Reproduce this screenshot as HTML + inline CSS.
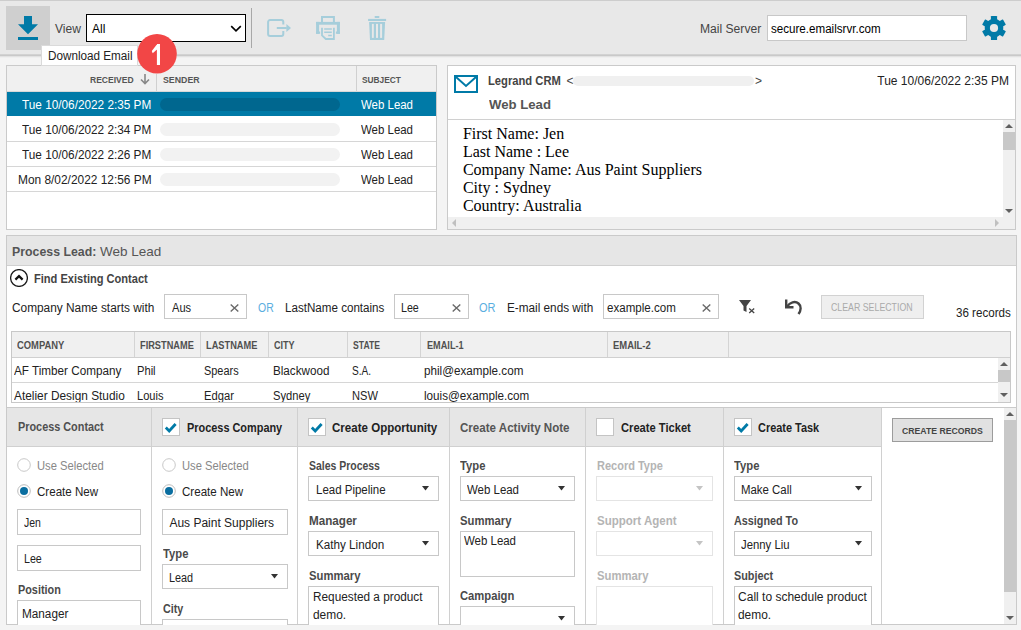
<!DOCTYPE html>
<html><head><meta charset="utf-8"><style>
html,body{margin:0;padding:0;width:1021px;height:630px;overflow:hidden;background:#f4f4f4;font-family:'Liberation Sans', sans-serif;}
body>div,body>svg{position:absolute;}
.t{white-space:nowrap;}
</style></head><body>
<div style="left:0px;top:0px;width:1021px;height:54px;background:#e8e8e8;"></div>
<div style="left:0px;top:0px;width:1021px;height:1px;background:#cdcdcd;"></div>
<div style="left:0px;top:54px;width:1021px;height:1px;background:#d2d2d2;"></div>
<div style="left:0px;top:55px;width:1021px;height:1px;background:#c9c9c9;"></div>
<div style="left:0px;top:56px;width:1021px;height:1px;background:#e2e2e2;"></div>
<div style="left:0px;top:57px;width:1021px;height:1px;background:#efefef;"></div>
<div style="left:6px;top:6px;width:44px;height:44px;background:#cfcfcf;"></div>
<svg style="left:18px;top:16px;" width="20" height="24" viewBox="0 0 20 24"><path d="M6 0h8v8.2h6l-10 10L0 8.2h6z" fill="#007aa7"/><rect x="0" y="21" width="20" height="3" fill="#007aa7"/></svg>
<div class="t" style="left:55.00px;top:22.84px;font-size:12px;line-height:12px;color:#444;">View</div>
<div style="left:86px;top:14px;width:160px;height:28px;background:#fff;border:1px solid #000;box-sizing:border-box;"></div>
<div class="t" style="left:92.00px;top:22.84px;font-size:12px;line-height:12px;color:#000;">All</div>
<svg style="left:230px;top:25px;" width="12" height="7" viewBox="0 0 12 7"><path d="M1.2 1.2l4.8 4.6 4.8-4.6" stroke="#000" stroke-width="1.6" fill="none"/></svg>
<div style="left:251px;top:8px;width:1px;height:40px;background:#a8a8a8;"></div>
<svg style="left:266px;top:18px;" width="26" height="20" viewBox="0 0 26 20"><path d="M17.3 6.4V4a2 2 0 0 0-2-2H4.1a2 2 0 0 0-2 2v11.9a2 2 0 0 0 2 2h11.2a2 2 0 0 0 2-2V13" stroke="#a6cedb" stroke-width="2" fill="none"/><path d="M10.8 10h10" stroke="#a6cedb" stroke-width="2"/><path d="M20.4 5.9l4.6 4.1-4.6 4.1z" fill="#a6cedb"/></svg>
<svg style="left:315px;top:15px;" width="26" height="27" viewBox="0 0 26 27"><path d="M7 7V2.1H18.9V7" stroke="#a6cedb" stroke-width="2" fill="none"/><g fill="#a6cedb"><rect x="1.1" y="6.9" width="23.8" height="2.8"/><rect x="1.1" y="6.9" width="3" height="11.9"/><rect x="21.9" y="6.9" width="3" height="11.9"/><rect x="1.1" y="16.5" width="4" height="2.3"/><rect x="20.9" y="16.5" width="4" height="2.3"/></g><path d="M7 12.7V20.3L10.8 24H18.9V12.7" stroke="#a6cedb" stroke-width="1.8" fill="none"/><path d="M9.2 14h7.6M9.2 17.2h7.6M13.2 20.4h3.6" stroke="#a6cedb" stroke-width="1.5"/></svg>
<svg style="left:367px;top:15px;" width="20" height="26" viewBox="0 0 20 26"><g fill="#a6cedb"><rect x="7.7" y="1.1" width="4.6" height="1.8" rx="0.5"/><rect x="1.1" y="3.9" width="18" height="2.1"/><path d="M2.1 6.9H18.1L17.2 24.9H3Z"/></g><g fill="#e8e8e8"><rect x="4.9" y="8.9" width="1.9" height="14"/><rect x="9" y="8.9" width="2" height="14"/><rect x="13.1" y="8.9" width="2" height="14"/></g></svg>
<div class="t" style="left:700.30px;top:22.84px;font-size:12px;line-height:12px;color:#444;transform:scaleX(1.0084);transform-origin:0 0;">Mail Server</div>
<div style="left:767px;top:15px;width:200px;height:26px;background:#fff;border:1px solid #c8c8c8;box-sizing:border-box;"></div>
<div class="t" style="left:771.00px;top:23.24px;font-size:12px;line-height:12px;color:#000;transform:scaleX(0.9667);transform-origin:0 0;">secure.emailsrvr.com</div>
<svg style="left:982px;top:16px;" width="24" height="24" viewBox="0 0 24 24"><g transform="translate(12,12)"><circle r="9.3" fill="#007aa7"/><rect x="-3.1" y="-12" width="6.2" height="5" rx="0.6" fill="#007aa7" transform="rotate(0)"/><rect x="-3.1" y="-12" width="6.2" height="5" rx="0.6" fill="#007aa7" transform="rotate(60)"/><rect x="-3.1" y="-12" width="6.2" height="5" rx="0.6" fill="#007aa7" transform="rotate(120)"/><rect x="-3.1" y="-12" width="6.2" height="5" rx="0.6" fill="#007aa7" transform="rotate(180)"/><rect x="-3.1" y="-12" width="6.2" height="5" rx="0.6" fill="#007aa7" transform="rotate(240)"/><rect x="-3.1" y="-12" width="6.2" height="5" rx="0.6" fill="#007aa7" transform="rotate(300)"/><circle r="4.1" fill="#e8e8e8"/></g></svg>
<div style="left:6px;top:65px;width:431px;height:165px;background:#fff;border:1px solid #cacaca;box-sizing:border-box;"></div>
<div style="left:7px;top:66px;width:429px;height:25px;background:#f0f0f0;"></div>
<div style="left:7px;top:91px;width:429px;height:1px;background:#d8d8d8;"></div>
<div style="left:156px;top:74px;width:1px;height:17px;background:#d0d0d0;"></div>
<div style="left:356px;top:66px;width:1px;height:25px;background:#d0d0d0;"></div>
<div class="t" style="left:90.30px;top:75.88px;font-size:9px;line-height:9px;color:#555;font-weight:700;transform:scaleX(0.9475);transform-origin:0 0;">RECEIVED</div>
<svg style="left:140px;top:74px;" width="10" height="11" viewBox="0 0 10 11"><path d="M5 0v9M1 5.5l4 4 4-4" stroke="#888" stroke-width="1.6" fill="none"/></svg>
<div class="t" style="left:162.50px;top:75.88px;font-size:9px;line-height:9px;color:#555;font-weight:700;transform:scaleX(0.9756);transform-origin:0 0;">SENDER</div>
<div class="t" style="left:362.00px;top:75.88px;font-size:9px;line-height:9px;color:#555;font-weight:700;transform:scaleX(0.9235);transform-origin:0 0;">SUBJECT</div>
<div style="left:7px;top:92px;width:429px;height:24px;background:#007aa7;"></div>
<div class="t" style="left:22.30px;top:99.34px;font-size:12px;line-height:12px;color:#fff;transform:scaleX(0.9821);transform-origin:0 0;">Tue 10/06/2022 2:35 PM</div>
<div style="left:160px;top:98.3px;width:180px;height:13px;background:#00678f;border-radius:6.5px;"></div>
<div class="t" style="left:361.00px;top:99.34px;font-size:12px;line-height:12px;color:#fff;transform:scaleX(0.9541);transform-origin:0 0;">Web Lead</div>
<div style="left:7px;top:141px;width:429px;height:1px;background:#d6d6d6;"></div>
<div class="t" style="left:22.30px;top:123.84px;font-size:12px;line-height:12px;color:#222;transform:scaleX(0.9821);transform-origin:0 0;">Tue 10/06/2022 2:34 PM</div>
<div style="left:160px;top:122.80000000000001px;width:180px;height:13px;background:#f2f2f2;border-radius:6.5px;"></div>
<div class="t" style="left:361.00px;top:123.84px;font-size:12px;line-height:12px;color:#222;transform:scaleX(0.9541);transform-origin:0 0;">Web Lead</div>
<div style="left:7px;top:166px;width:429px;height:1px;background:#d6d6d6;"></div>
<div class="t" style="left:22.30px;top:148.84px;font-size:12px;line-height:12px;color:#222;transform:scaleX(0.9821);transform-origin:0 0;">Tue 10/06/2022 2:26 PM</div>
<div style="left:160px;top:147.8px;width:180px;height:13px;background:#f2f2f2;border-radius:6.5px;"></div>
<div class="t" style="left:361.00px;top:148.84px;font-size:12px;line-height:12px;color:#222;transform:scaleX(0.9541);transform-origin:0 0;">Web Lead</div>
<div style="left:7px;top:191px;width:429px;height:1px;background:#d6d6d6;"></div>
<div class="t" style="left:18.00px;top:173.84px;font-size:12px;line-height:12px;color:#222;transform:scaleX(0.9914);transform-origin:0 0;">Mon 8/02/2022 12:56 PM</div>
<div style="left:160px;top:172.8px;width:180px;height:13px;background:#f2f2f2;border-radius:6.5px;"></div>
<div class="t" style="left:361.00px;top:173.84px;font-size:12px;line-height:12px;color:#222;transform:scaleX(0.9541);transform-origin:0 0;">Web Lead</div>
<div style="left:447px;top:65px;width:569px;height:165px;background:#fff;border:1px solid #cacaca;box-sizing:border-box;"></div>
<div style="left:448px;top:119px;width:567px;height:1px;background:#d0d0d0;"></div>
<svg style="left:454px;top:75px;" width="24" height="18" viewBox="0 0 24 18"><rect x="1" y="1" width="22" height="16" stroke="#007aa7" stroke-width="2" fill="none"/><path d="M2 2l10 9 10-9" stroke="#007aa7" stroke-width="2" fill="none"/></svg>
<div class="t" style="left:488.20px;top:74.54px;font-size:12px;line-height:12px;color:#444;font-weight:700;transform:scaleX(0.9333);transform-origin:0 0;">Legrand CRM</div>
<div class="t" style="left:566.50px;top:74.54px;font-size:12px;line-height:12px;color:#444;">&lt;</div>
<div style="left:573px;top:76px;width:181px;height:10px;background:#f0f0f0;border-radius:5px;"></div>
<div class="t" style="left:755.00px;top:74.54px;font-size:12px;line-height:12px;color:#444;">&gt;</div>
<div class="t" style="left:877.30px;top:75.04px;font-size:12px;line-height:12px;color:#222;">Tue 10/06/2022 2:35 PM</div>
<div class="t" style="left:488.50px;top:97.60px;font-size:13px;line-height:13px;color:#555;font-weight:700;transform:scaleX(1.0135);transform-origin:0 0;">Web Lead</div>
<div class="t" style="left:462.90px;top:126.20px;font-size:16px;line-height:16px;color:#000;font-family:'Liberation Serif', serif;">First Name: Jen</div>
<div class="t" style="left:462.90px;top:143.90px;font-size:16px;line-height:16px;color:#000;font-family:'Liberation Serif', serif;">Last Name : Lee</div>
<div class="t" style="left:462.90px;top:161.80px;font-size:16px;line-height:16px;color:#000;font-family:'Liberation Serif', serif;">Company Name: Aus Paint Suppliers</div>
<div class="t" style="left:462.90px;top:180.40px;font-size:16px;line-height:16px;color:#000;font-family:'Liberation Serif', serif;">City : Sydney</div>
<div class="t" style="left:462.90px;top:198.20px;font-size:16px;line-height:16px;color:#000;font-family:'Liberation Serif', serif;">Country: Australia</div>
<div style="left:1003px;top:120px;width:12px;height:97px;background:#f0f0f0;"></div>
<svg style="left:1003px;top:122px;" width="12" height="8" viewBox="0 0 12 8"><path d="M2 6h8L6 2z" fill="#606060"/></svg>
<div style="left:1003px;top:132px;width:12px;height:18px;background:#c8c8c8;"></div>
<svg style="left:1003px;top:207px;" width="12" height="8" viewBox="0 0 12 8"><path d="M2 2h8L6 6z" fill="#606060"/></svg>
<div style="left:448px;top:217px;width:555px;height:12px;background:#f0f0f0;"></div>
<svg style="left:449px;top:218px;" width="10" height="10" viewBox="0 0 10 10"><path d="M7 1v8L3 5z" fill="#c0c0c0"/></svg>
<svg style="left:992px;top:218px;" width="10" height="10" viewBox="0 0 10 10"><path d="M3 1v8l4-4z" fill="#c0c0c0"/></svg>
<div style="left:1003px;top:217px;width:12px;height:12px;background:#f0f0f0;"></div>
<div style="left:6px;top:235px;width:1011px;height:390px;background:#fff;border:1px solid #cacaca;box-sizing:border-box;"></div>
<div style="left:7px;top:236px;width:1009px;height:29px;background:#e6e6e6;"></div>
<div style="left:7px;top:265px;width:1009px;height:1px;background:#d0d0d0;"></div>
<div class="t" style="left:12.30px;top:245.07px;font-size:13.5px;line-height:13.5px;color:#555;font-weight:700;transform:scaleX(0.9134);transform-origin:0 0;">Process Lead:</div>
<div class="t" style="left:100.00px;top:245.07px;font-size:13.5px;line-height:13.5px;color:#555;">Web Lead</div>
<svg style="left:10px;top:269px;" width="18" height="18" viewBox="0 0 18 18"><circle cx="9" cy="9" r="8.4" stroke="#1a1a1a" stroke-width="1.3" fill="none"/><path d="M5.4 10.6L9 7.1l3.6 3.5" stroke="#111" stroke-width="2.2" fill="none"/></svg>
<div class="t" style="left:33.50px;top:272.84px;font-size:12px;line-height:12px;color:#444;font-weight:700;transform:scaleX(0.9226);transform-origin:0 0;">Find Existing Contact</div>
<div class="t" style="left:11.50px;top:301.84px;font-size:12px;line-height:12px;color:#222;transform:scaleX(0.9879);transform-origin:0 0;">Company Name starts with</div>
<div style="left:164px;top:294px;width:83px;height:25px;background:#fff;border:1px solid #c8c8c8;box-sizing:border-box;"></div>
<div class="t" style="left:172.00px;top:301.84px;font-size:12px;line-height:12px;color:#222;transform:scaleX(0.9233);transform-origin:0 0;">Aus</div>
<svg style="left:230px;top:303.5px;" width="9" height="8" viewBox="0 0 9 8"><path d="M0.7 0.5l7.6 7M8.3 0.5l-7.6 7" stroke="#6a6a6a" stroke-width="1.4"/></svg>
<div class="t" style="left:257.50px;top:301.84px;font-size:12px;line-height:12px;color:#5aaee0;transform:scaleX(0.8722);transform-origin:0 0;">OR</div>
<div class="t" style="left:284.60px;top:301.84px;font-size:12px;line-height:12px;color:#222;transform:scaleX(0.9675);transform-origin:0 0;">LastName contains</div>
<div style="left:394px;top:294px;width:75px;height:25px;background:#fff;border:1px solid #c8c8c8;box-sizing:border-box;"></div>
<div class="t" style="left:401.00px;top:301.84px;font-size:12px;line-height:12px;color:#222;transform:scaleX(0.8886);transform-origin:0 0;">Lee</div>
<svg style="left:452px;top:303.5px;" width="9" height="8" viewBox="0 0 9 8"><path d="M0.7 0.5l7.6 7M8.3 0.5l-7.6 7" stroke="#6a6a6a" stroke-width="1.4"/></svg>
<div class="t" style="left:479.20px;top:301.84px;font-size:12px;line-height:12px;color:#5aaee0;transform:scaleX(0.9167);transform-origin:0 0;">OR</div>
<div class="t" style="left:506.50px;top:301.84px;font-size:12px;line-height:12px;color:#222;transform:scaleX(0.9792);transform-origin:0 0;">E-mail ends with</div>
<div style="left:603px;top:294px;width:116px;height:25px;background:#fff;border:1px solid #c8c8c8;box-sizing:border-box;"></div>
<div class="t" style="left:607.40px;top:301.84px;font-size:12px;line-height:12px;color:#222;transform:scaleX(0.9639);transform-origin:0 0;">example.com</div>
<svg style="left:702px;top:303.5px;" width="9" height="8" viewBox="0 0 9 8"><path d="M0.7 0.5l7.6 7M8.3 0.5l-7.6 7" stroke="#6a6a6a" stroke-width="1.4"/></svg>
<svg style="left:738px;top:299px;" width="18" height="15" viewBox="0 0 18 15"><path d="M1 1h12L8.5 7v6l-3-1.5V7z" fill="#444"/><path d="M11.2 9.5l5 4.5M16.2 9.5l-5 4.5" stroke="#444" stroke-width="1.3"/></svg>
<svg style="left:783px;top:297px;" width="20" height="20" viewBox="0 0 20 20"><path d="M3.2 2.5V10.2H10.5" stroke="#444" stroke-width="2.4" fill="none"/><path d="M4 9.5C7 5.5 12 3.5 15.5 6.5C18.5 9 18 13.5 15.5 17" stroke="#444" stroke-width="2.5" fill="none"/></svg>
<div style="left:821px;top:295px;width:103px;height:24px;background:#efefef;border:1px solid #d2d2d2;box-sizing:border-box;"></div>
<div class="t" style="left:831.40px;top:302.41px;font-size:10.5px;line-height:10.5px;color:#aaaaaa;transform:scaleX(0.8373);transform-origin:0 0;">CLEAR SELECTION</div>
<div class="t" style="left:956.00px;top:306.84px;font-size:12px;line-height:12px;color:#222;transform:scaleX(0.9664);transform-origin:0 0;">36 records</div>
<div style="left:11px;top:331px;width:1000px;height:72px;background:#fff;border:1px solid #c8c8c8;box-sizing:border-box;"></div>
<div style="left:12px;top:332px;width:998px;height:25px;background:#f0f0f0;"></div>
<div style="left:12px;top:357px;width:998px;height:1px;background:#d0d0d0;"></div>
<div style="left:134px;top:332px;width:1px;height:25px;background:#d4d4d4;"></div>
<div style="left:200px;top:332px;width:1px;height:25px;background:#d4d4d4;"></div>
<div style="left:268px;top:332px;width:1px;height:25px;background:#d4d4d4;"></div>
<div style="left:347px;top:332px;width:1px;height:25px;background:#d4d4d4;"></div>
<div style="left:420px;top:332px;width:1px;height:25px;background:#d4d4d4;"></div>
<div style="left:607px;top:332px;width:1px;height:25px;background:#d4d4d4;"></div>
<div style="left:728px;top:332px;width:1px;height:25px;background:#d4d4d4;"></div>
<div class="t" style="left:17.20px;top:340.84px;font-size:10px;line-height:10px;color:#505050;font-weight:700;transform:scaleX(0.9409);transform-origin:0 0;">COMPANY</div>
<div class="t" style="left:140.30px;top:340.84px;font-size:10px;line-height:10px;color:#505050;font-weight:700;transform:scaleX(0.9221);transform-origin:0 0;">FIRSTNAME</div>
<div class="t" style="left:206.40px;top:340.84px;font-size:10px;line-height:10px;color:#505050;font-weight:700;transform:scaleX(0.9251);transform-origin:0 0;">LASTNAME</div>
<div class="t" style="left:274.00px;top:340.84px;font-size:10px;line-height:10px;color:#505050;font-weight:700;transform:scaleX(0.9043);transform-origin:0 0;">CITY</div>
<div class="t" style="left:352.70px;top:340.84px;font-size:10px;line-height:10px;color:#505050;font-weight:700;transform:scaleX(0.8627);transform-origin:0 0;">STATE</div>
<div class="t" style="left:426.50px;top:340.84px;font-size:10px;line-height:10px;color:#505050;font-weight:700;transform:scaleX(0.9150);transform-origin:0 0;">EMAIL-1</div>
<div class="t" style="left:613.30px;top:340.84px;font-size:10px;line-height:10px;color:#505050;font-weight:700;transform:scaleX(0.9425);transform-origin:0 0;">EMAIL-2</div>
<div style="left:12px;top:382px;width:986px;height:1px;background:#d6d6d6;"></div>
<div class="t" style="left:14.10px;top:364.64px;font-size:12px;line-height:12px;color:#222;transform:scaleX(0.9759);transform-origin:0 0;">AF Timber Company</div>
<div class="t" style="left:137.30px;top:364.64px;font-size:12px;line-height:12px;color:#222;transform:scaleX(0.9293);transform-origin:0 0;">Phil</div>
<div class="t" style="left:203.50px;top:364.64px;font-size:12px;line-height:12px;color:#222;transform:scaleX(0.9098);transform-origin:0 0;">Spears</div>
<div class="t" style="left:273.40px;top:364.64px;font-size:12px;line-height:12px;color:#222;transform:scaleX(0.9719);transform-origin:0 0;">Blackwood</div>
<div class="t" style="left:352.40px;top:364.64px;font-size:12px;line-height:12px;color:#222;transform:scaleX(0.8419);transform-origin:0 0;">S.A.</div>
<div class="t" style="left:423.70px;top:364.64px;font-size:12px;line-height:12px;color:#222;transform:scaleX(0.9723);transform-origin:0 0;">phil@example.com</div>
<div class="t" style="left:14.10px;top:390.14px;font-size:12px;line-height:12px;color:#222;transform:scaleX(0.9887);transform-origin:0 0;">Atelier Design Studio</div>
<div class="t" style="left:137.30px;top:390.14px;font-size:12px;line-height:12px;color:#222;transform:scaleX(0.9237);transform-origin:0 0;">Louis</div>
<div class="t" style="left:203.50px;top:390.14px;font-size:12px;line-height:12px;color:#222;transform:scaleX(0.9335);transform-origin:0 0;">Edgar</div>
<div class="t" style="left:273.40px;top:390.14px;font-size:12px;line-height:12px;color:#222;transform:scaleX(0.9318);transform-origin:0 0;">Sydney</div>
<div class="t" style="left:352.40px;top:390.14px;font-size:12px;line-height:12px;color:#222;transform:scaleX(0.9250);transform-origin:0 0;">NSW</div>
<div class="t" style="left:423.70px;top:390.14px;font-size:12px;line-height:12px;color:#222;transform:scaleX(0.9729);transform-origin:0 0;">louis@example.com</div>
<div style="left:12px;top:402px;width:998px;height:0px;"></div>
<div style="left:998px;top:358px;width:12px;height:44px;background:#f0f0f0;"></div>
<svg style="left:998px;top:360px;" width="12" height="8" viewBox="0 0 12 8"><path d="M2 6h8L6 2z" fill="#606060"/></svg>
<div style="left:998px;top:370px;width:12px;height:12px;background:#c8c8c8;"></div>
<svg style="left:998px;top:391px;" width="12" height="8" viewBox="0 0 12 8"><path d="M2 2h8L6 6z" fill="#606060"/></svg>
<div style="left:12px;top:402px;width:986px;height:1px;background:#c8c8c8;"></div>
<div style="left:6px;top:407px;width:1011px;height:218px;background:#fff;border:1px solid #cacaca;box-sizing:border-box;"></div>
<div style="left:7px;top:408px;width:875px;height:38px;background:#e6e6e6;"></div>
<div style="left:7px;top:446px;width:875px;height:1px;background:#d0d0d0;"></div>
<div style="left:151px;top:408px;width:1px;height:216px;background:#d0d0d0;"></div>
<div style="left:297px;top:408px;width:1px;height:216px;background:#d0d0d0;"></div>
<div style="left:449px;top:408px;width:1px;height:216px;background:#d0d0d0;"></div>
<div style="left:585px;top:408px;width:1px;height:216px;background:#d0d0d0;"></div>
<div style="left:723px;top:408px;width:1px;height:216px;background:#d0d0d0;"></div>
<div style="left:881px;top:408px;width:1px;height:216px;background:#d0d0d0;"></div>
<div style="left:1004px;top:408px;width:12px;height:216px;background:#f0f0f0;"></div>
<svg style="left:1004px;top:410px;" width="12" height="8" viewBox="0 0 12 8"><path d="M2 6h8L6 2z" fill="#606060"/></svg>
<div style="left:1004px;top:420px;width:12px;height:172px;background:#c8c8c8;"></div>
<svg style="left:1004px;top:614px;" width="12" height="8" viewBox="0 0 12 8"><path d="M2 2h8L6 6z" fill="#606060"/></svg>
<div class="t" style="left:17.50px;top:421.34px;font-size:12px;line-height:12px;color:#505050;font-weight:700;transform:scaleX(0.9049);transform-origin:0 0;">Process Contact</div>
<div style="left:162px;top:418px;width:18px;height:18px;background:#fff;border:1px solid #c4c4c4;box-sizing:border-box;"></div>
<svg style="left:162px;top:418px;" width="18" height="18" viewBox="0 0 18 18"><path d="M3.8 9.6l3.4 3.4L13.6 6" stroke="#007aa7" stroke-width="2.8" fill="none"/></svg>
<div class="t" style="left:186.60px;top:422.34px;font-size:12px;line-height:12px;color:#222;font-weight:700;transform:scaleX(0.9091);transform-origin:0 0;">Process Company</div>
<div style="left:308px;top:418px;width:18px;height:18px;background:#fff;border:1px solid #c4c4c4;box-sizing:border-box;"></div>
<svg style="left:308px;top:418px;" width="18" height="18" viewBox="0 0 18 18"><path d="M3.8 9.6l3.4 3.4L13.6 6" stroke="#007aa7" stroke-width="2.8" fill="none"/></svg>
<div class="t" style="left:332.30px;top:422.34px;font-size:12px;line-height:12px;color:#222;font-weight:700;transform:scaleX(0.9621);transform-origin:0 0;">Create Opportunity</div>
<div class="t" style="left:460.10px;top:422.34px;font-size:12px;line-height:12px;color:#555;font-weight:700;transform:scaleX(0.9640);transform-origin:0 0;">Create Activity Note</div>
<div style="left:596px;top:418px;width:18px;height:18px;background:#fff;border:1px solid #c4c4c4;box-sizing:border-box;"></div>
<div class="t" style="left:620.50px;top:422.34px;font-size:12px;line-height:12px;color:#222;font-weight:700;transform:scaleX(0.9287);transform-origin:0 0;">Create Ticket</div>
<div style="left:734px;top:418px;width:18px;height:18px;background:#fff;border:1px solid #c4c4c4;box-sizing:border-box;"></div>
<svg style="left:734px;top:418px;" width="18" height="18" viewBox="0 0 18 18"><path d="M3.8 9.6l3.4 3.4L13.6 6" stroke="#007aa7" stroke-width="2.8" fill="none"/></svg>
<div class="t" style="left:758.20px;top:422.34px;font-size:12px;line-height:12px;color:#222;font-weight:700;transform:scaleX(0.9113);transform-origin:0 0;">Create Task</div>
<svg style="left:17px;top:458px;" width="14" height="14" viewBox="0 0 14 14"><circle cx="7" cy="7" r="6.3" stroke="#c8c8c8" stroke-width="1" fill="#fff"/></svg>
<div class="t" style="left:37.30px;top:459.64px;font-size:12px;line-height:12px;color:#888;transform:scaleX(0.9345);transform-origin:0 0;">Use Selected</div>
<svg style="left:17px;top:484px;" width="14" height="14" viewBox="0 0 14 14"><circle cx="7" cy="7" r="6.3" stroke="#bdbdbd" stroke-width="1" fill="#fff"/><circle cx="7" cy="7" r="4" fill="#0a6ea0"/></svg>
<div class="t" style="left:37.30px;top:485.54px;font-size:12px;line-height:12px;color:#222;transform:scaleX(0.9643);transform-origin:0 0;">Create New</div>
<svg style="left:162px;top:458px;" width="14" height="14" viewBox="0 0 14 14"><circle cx="7" cy="7" r="6.3" stroke="#c8c8c8" stroke-width="1" fill="#fff"/></svg>
<div class="t" style="left:182.30px;top:459.64px;font-size:12px;line-height:12px;color:#888;transform:scaleX(0.9345);transform-origin:0 0;">Use Selected</div>
<svg style="left:162px;top:484px;" width="14" height="14" viewBox="0 0 14 14"><circle cx="7" cy="7" r="6.3" stroke="#bdbdbd" stroke-width="1" fill="#fff"/><circle cx="7" cy="7" r="4" fill="#0a6ea0"/></svg>
<div class="t" style="left:182.30px;top:485.54px;font-size:12px;line-height:12px;color:#222;transform:scaleX(0.9643);transform-origin:0 0;">Create New</div>
<div style="left:17px;top:509px;width:124px;height:26px;background:#fff;border:1px solid #c8c8c8;box-sizing:border-box;"></div>
<div class="t" style="left:24.40px;top:516.64px;font-size:12px;line-height:12px;color:#222;transform:scaleX(0.8730);transform-origin:0 0;">Jen</div>
<div style="left:17px;top:545px;width:124px;height:26px;background:#fff;border:1px solid #c8c8c8;box-sizing:border-box;"></div>
<div class="t" style="left:24.40px;top:552.64px;font-size:12px;line-height:12px;color:#222;transform:scaleX(0.8886);transform-origin:0 0;">Lee</div>
<div class="t" style="left:17.50px;top:584.14px;font-size:12px;line-height:12px;color:#4a4a4a;font-weight:700;transform:scaleX(0.9040);transform-origin:0 0;">Position</div>
<div style="left:17px;top:600px;width:124px;height:30px;background:#fff;border:1px solid #c8c8c8;box-sizing:border-box;"></div>
<div class="t" style="left:21.70px;top:607.84px;font-size:12px;line-height:12px;color:#222;transform:scaleX(0.9794);transform-origin:0 0;">Manager</div>
<div style="left:162px;top:509px;width:126px;height:26px;background:#fff;border:1px solid #c8c8c8;box-sizing:border-box;"></div>
<div class="t" style="left:169.40px;top:516.64px;font-size:12px;line-height:12px;color:#222;">Aus Paint Suppliers</div>
<div class="t" style="left:162.50px;top:548.24px;font-size:12px;line-height:12px;color:#4a4a4a;font-weight:700;transform:scaleX(0.9364);transform-origin:0 0;">Type</div>
<div style="left:162px;top:564px;width:126px;height:25px;background:#fff;border:1px solid #c8c8c8;box-sizing:border-box;"></div>
<div class="t" style="left:169.40px;top:572.34px;font-size:12px;line-height:12px;color:#222;transform:scaleX(0.9025);transform-origin:0 0;">Lead</div>
<svg style="left:271px;top:574px;" width="8" height="5" viewBox="0 0 8 5"><path d="M0 0h7L3.5 4.5z" fill="#333"/></svg>
<div class="t" style="left:162.50px;top:603.34px;font-size:12px;line-height:12px;color:#4a4a4a;font-weight:700;transform:scaleX(0.8954);transform-origin:0 0;">City</div>
<div style="left:162px;top:619px;width:126px;height:11px;background:#fff;border:1px solid #c8c8c8;box-sizing:border-box;"></div>
<div class="t" style="left:308.50px;top:459.94px;font-size:12px;line-height:12px;color:#4a4a4a;font-weight:700;transform:scaleX(0.8709);transform-origin:0 0;">Sales Process</div>
<div style="left:308px;top:476px;width:131px;height:25px;background:#fff;border:1px solid #c8c8c8;box-sizing:border-box;"></div>
<div class="t" style="left:315.60px;top:484.34px;font-size:12px;line-height:12px;color:#222;transform:scaleX(0.9569);transform-origin:0 0;">Lead Pipeline</div>
<svg style="left:422px;top:486px;" width="8" height="5" viewBox="0 0 8 5"><path d="M0 0h7L3.5 4.5z" fill="#333"/></svg>
<div class="t" style="left:308.50px;top:515.04px;font-size:12px;line-height:12px;color:#4a4a4a;font-weight:700;transform:scaleX(0.9704);transform-origin:0 0;">Manager</div>
<div style="left:308px;top:531px;width:131px;height:25px;background:#fff;border:1px solid #c8c8c8;box-sizing:border-box;"></div>
<div class="t" style="left:315.60px;top:539.34px;font-size:12px;line-height:12px;color:#222;transform:scaleX(0.9734);transform-origin:0 0;">Kathy Lindon</div>
<svg style="left:422px;top:541px;" width="8" height="5" viewBox="0 0 8 5"><path d="M0 0h7L3.5 4.5z" fill="#333"/></svg>
<div class="t" style="left:308.50px;top:569.94px;font-size:12px;line-height:12px;color:#4a4a4a;font-weight:700;transform:scaleX(0.9414);transform-origin:0 0;">Summary</div>
<div style="left:308px;top:586px;width:131px;height:44px;background:#fff;border:1px solid #c8c8c8;box-sizing:border-box;"></div>
<div class="t" style="left:312.50px;top:591.04px;font-size:12px;line-height:12px;color:#222;transform:scaleX(0.9828);transform-origin:0 0;">Requested a product</div>
<div class="t" style="left:312.50px;top:608.54px;font-size:12px;line-height:12px;color:#222;transform:scaleX(0.9922);transform-origin:0 0;">demo.</div>
<div class="t" style="left:460.10px;top:459.94px;font-size:12px;line-height:12px;color:#4a4a4a;font-weight:700;transform:scaleX(0.9364);transform-origin:0 0;">Type</div>
<div style="left:460px;top:476px;width:115px;height:25px;background:#fff;border:1px solid #c8c8c8;box-sizing:border-box;"></div>
<div class="t" style="left:467.00px;top:484.34px;font-size:12px;line-height:12px;color:#222;transform:scaleX(0.9541);transform-origin:0 0;">Web Lead</div>
<svg style="left:558px;top:486px;" width="8" height="5" viewBox="0 0 8 5"><path d="M0 0h7L3.5 4.5z" fill="#333"/></svg>
<div class="t" style="left:460.10px;top:515.04px;font-size:12px;line-height:12px;color:#4a4a4a;font-weight:700;transform:scaleX(0.9414);transform-origin:0 0;">Summary</div>
<div style="left:460px;top:531px;width:115px;height:46px;background:#fff;border:1px solid #c8c8c8;box-sizing:border-box;"></div>
<div class="t" style="left:464.20px;top:535.24px;font-size:12px;line-height:12px;color:#222;transform:scaleX(0.9541);transform-origin:0 0;">Web Lead</div>
<div class="t" style="left:460.10px;top:589.94px;font-size:12px;line-height:12px;color:#4a4a4a;font-weight:700;transform:scaleX(0.9360);transform-origin:0 0;">Campaign</div>
<div style="left:460px;top:606px;width:115px;height:25px;background:#fff;border:1px solid #c8c8c8;box-sizing:border-box;"></div>
<svg style="left:558px;top:616px;" width="8" height="5" viewBox="0 0 8 5"><path d="M0 0h7L3.5 4.5z" fill="#333"/></svg>
<div class="t" style="left:596.50px;top:459.94px;font-size:12px;line-height:12px;color:#b4b4b4;font-weight:700;transform:scaleX(0.9165);transform-origin:0 0;">Record Type</div>
<div style="left:596px;top:476px;width:117px;height:25px;background:#fff;border:1px solid #e4e4e4;box-sizing:border-box;"></div>
<svg style="left:696px;top:486px;" width="8" height="5" viewBox="0 0 8 5"><path d="M0 0h7L3.5 4.5z" fill="#c4c4c4"/></svg>
<div class="t" style="left:596.50px;top:515.04px;font-size:12px;line-height:12px;color:#b4b4b4;font-weight:700;transform:scaleX(0.9593);transform-origin:0 0;">Support Agent</div>
<div style="left:596px;top:531px;width:117px;height:25px;background:#fff;border:1px solid #e4e4e4;box-sizing:border-box;"></div>
<svg style="left:696px;top:541px;" width="8" height="5" viewBox="0 0 8 5"><path d="M0 0h7L3.5 4.5z" fill="#c4c4c4"/></svg>
<div class="t" style="left:596.50px;top:569.94px;font-size:12px;line-height:12px;color:#b4b4b4;font-weight:700;transform:scaleX(0.9414);transform-origin:0 0;">Summary</div>
<div style="left:596px;top:586px;width:117px;height:44px;background:#fff;border:1px solid #e4e4e4;box-sizing:border-box;"></div>
<div class="t" style="left:734.40px;top:459.94px;font-size:12px;line-height:12px;color:#4a4a4a;font-weight:700;transform:scaleX(0.9364);transform-origin:0 0;">Type</div>
<div style="left:734px;top:476px;width:138px;height:25px;background:#fff;border:1px solid #c8c8c8;box-sizing:border-box;"></div>
<div class="t" style="left:741.00px;top:484.34px;font-size:12px;line-height:12px;color:#222;transform:scaleX(0.9520);transform-origin:0 0;">Make Call</div>
<svg style="left:855px;top:486px;" width="8" height="5" viewBox="0 0 8 5"><path d="M0 0h7L3.5 4.5z" fill="#333"/></svg>
<div class="t" style="left:734.40px;top:515.04px;font-size:12px;line-height:12px;color:#4a4a4a;font-weight:700;transform:scaleX(0.8998);transform-origin:0 0;">Assigned To</div>
<div style="left:734px;top:531px;width:138px;height:25px;background:#fff;border:1px solid #c8c8c8;box-sizing:border-box;"></div>
<div class="t" style="left:741.00px;top:539.34px;font-size:12px;line-height:12px;color:#222;transform:scaleX(0.9440);transform-origin:0 0;">Jenny Liu</div>
<svg style="left:855px;top:541px;" width="8" height="5" viewBox="0 0 8 5"><path d="M0 0h7L3.5 4.5z" fill="#333"/></svg>
<div class="t" style="left:734.40px;top:569.94px;font-size:12px;line-height:12px;color:#4a4a4a;font-weight:700;transform:scaleX(0.9044);transform-origin:0 0;">Subject</div>
<div style="left:734px;top:586px;width:138px;height:44px;background:#fff;border:1px solid #c8c8c8;box-sizing:border-box;"></div>
<div class="t" style="left:738.10px;top:591.04px;font-size:12px;line-height:12px;color:#222;">Call to schedule product</div>
<div class="t" style="left:738.10px;top:608.54px;font-size:12px;line-height:12px;color:#222;transform:scaleX(0.9922);transform-origin:0 0;">demo.</div>
<div style="left:892px;top:418px;width:101px;height:24px;background:#e1e1e1;border:1px solid #9c9c9c;box-sizing:border-box;"></div>
<div class="t" style="left:902.20px;top:425.96px;font-size:9.5px;line-height:9.5px;color:#444;font-weight:700;transform:scaleX(0.9130);transform-origin:0 0;">CREATE RECORDS</div>
<div style="left:0px;top:625px;width:1021px;height:5px;background:#f4f4f4;"></div>
<div style="left:41px;top:45px;width:97px;height:21px;background:#fff;border:1px solid #dadada;box-sizing:border-box;"></div>
<div class="t" style="left:48.30px;top:49.84px;font-size:12px;line-height:12px;color:#222;transform:scaleX(0.9744);transform-origin:0 0;">Download Email</div>
<svg style="left:137px;top:34px;" width="40" height="40" viewBox="0 0 40 40"><circle cx="20" cy="19.8" r="19.8" fill="#f24646"/><path d="M19.9 10H23V31H19.9zM14.8 17L20.2 10H23V12.8L15.7 19.3Z" fill="#fff"/></svg>
</body></html>
